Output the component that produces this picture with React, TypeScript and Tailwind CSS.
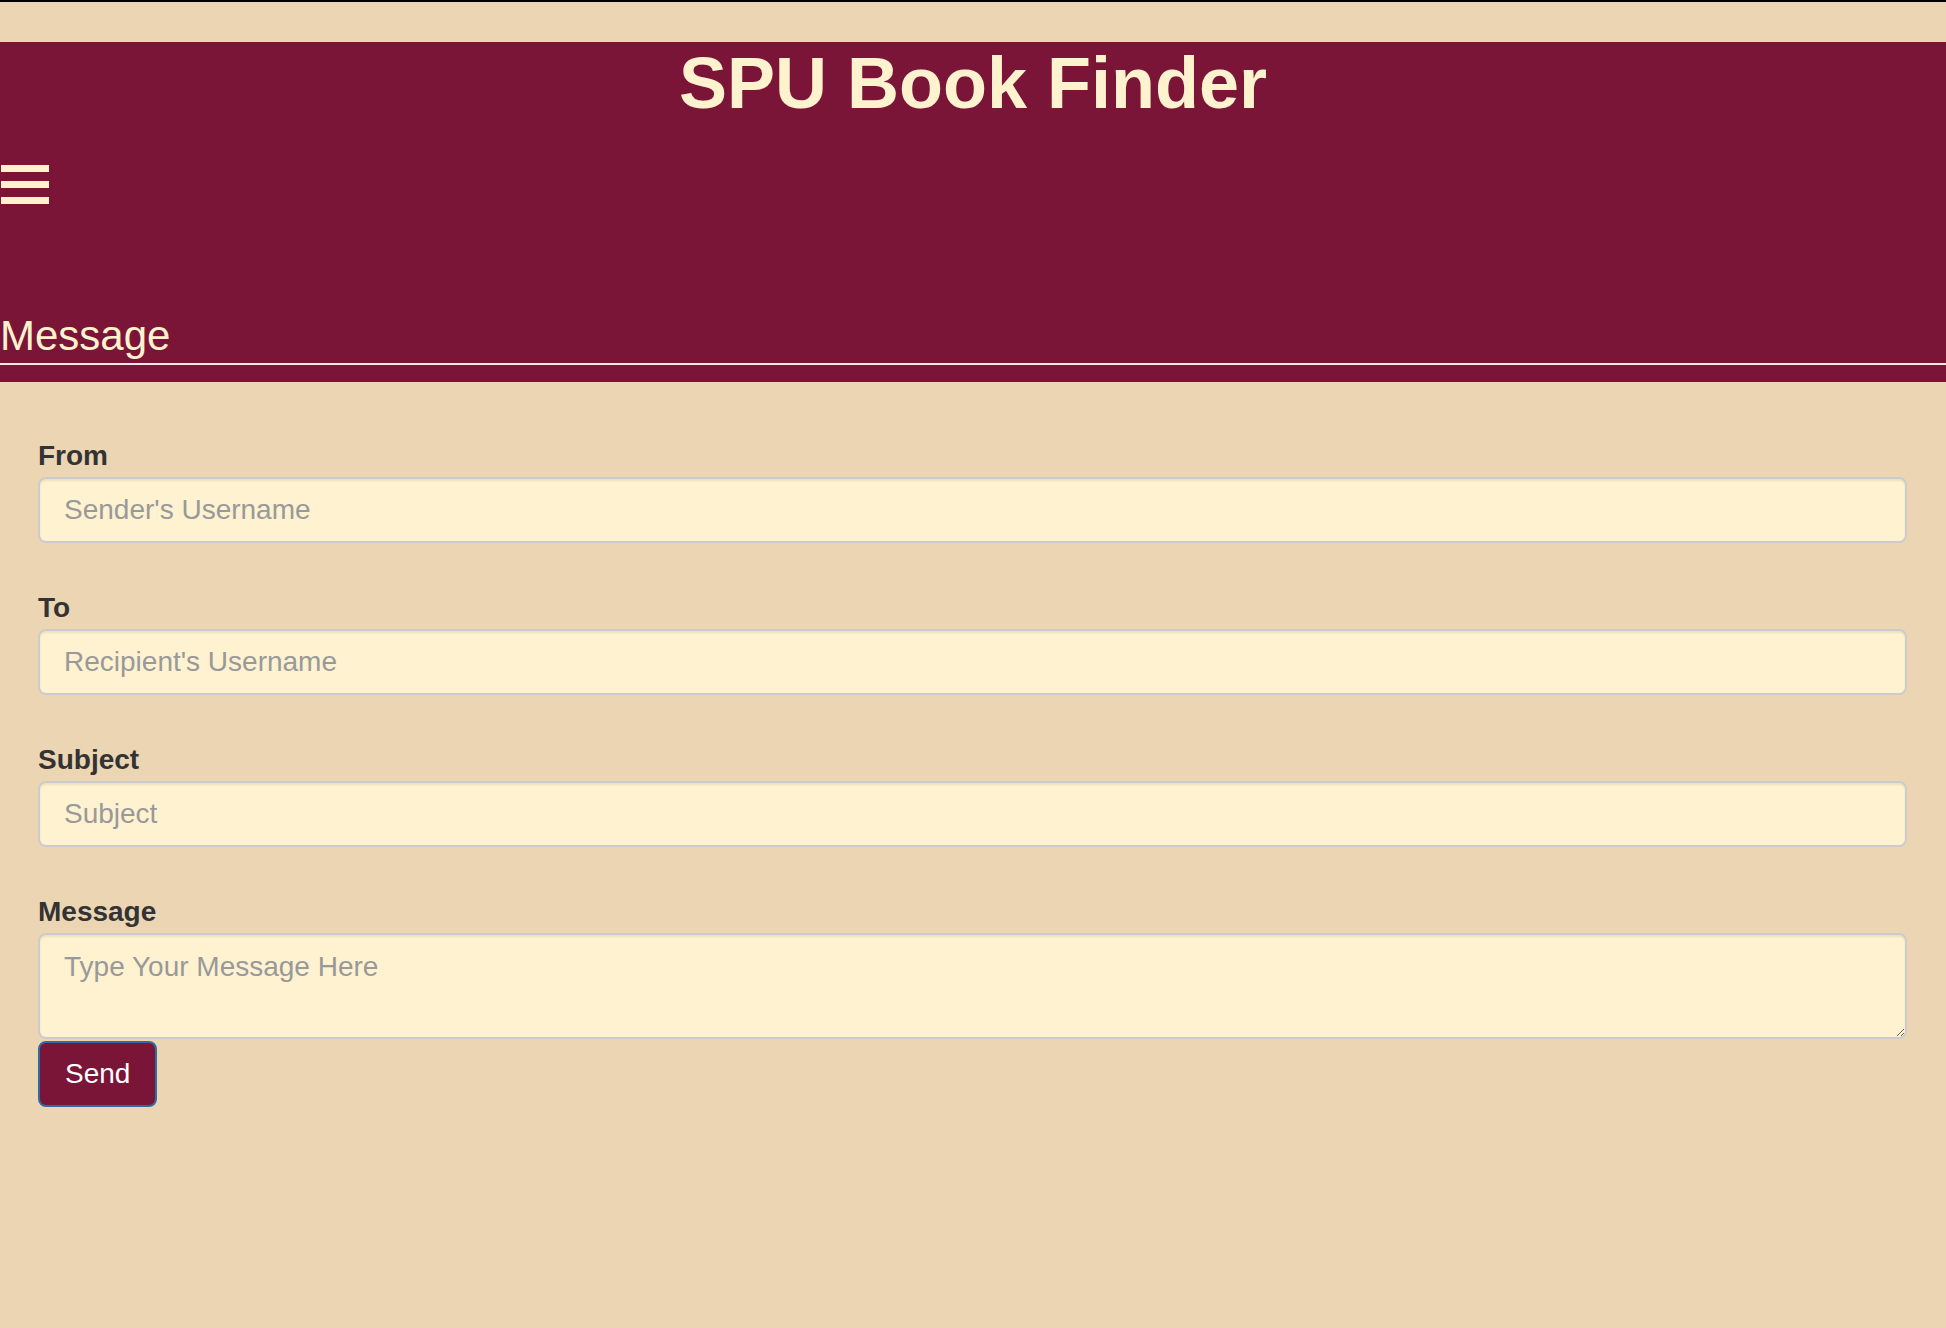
import React from "react";

const fields = [
    {label: "From", placeholder: "Sender's Username"},
    {label: "To", placeholder: "Recipient's Username"},
    {label: "Subject", placeholder: "Subject"},
];

const MenuIcon: React.FC = () => (
    <div className="ml-px mt-[41px] flex w-[48px] flex-col gap-[9px]">
        <div className="h-[7px] bg-[#fff2cf]"></div>
        <div className="h-[7px] bg-[#fff2cf]"></div>
        <div className="h-[7px] bg-[#fff2cf]"></div>
    </div>
);

const App: React.FC = () => {
    return (
        <div className="min-h-screen bg-[#ebd5b3] font-['Liberation_Sans',Arial,sans-serif]">
            <div className="h-[2px] bg-black"></div>
            <div className="h-[40px]"></div>

            <header className="bg-[#7b1537] pb-[17px]">
                <h1 className="text-center text-[72px] font-bold leading-[82px] text-[#fff2cf]">
                    SPU Book Finder
                </h1>
                <MenuIcon/>
                <h2 className="mt-[108px] border-b-2 border-[#f4ebe0] pb-[3px] text-[42px] leading-[48px] text-[#fff2cf]">
                    Message
                </h2>
            </header>

            <main className="pl-[38px] pr-[39px] pt-[54px]">
                <form onSubmit={(e) => e.preventDefault()}>
                    {fields.map((f) => (
                        <div key={f.label} className="mb-[45px]">
                            <label className="mb-px block text-[28px] font-bold leading-[40px] text-[#333]">
                                {f.label}
                            </label>
                            <input
                                type="text"
                                placeholder={f.placeholder}
                                className="block h-[66px] w-full rounded-[8px] border-2 border-[#cccccc] bg-[#fff2d0] px-[24px] text-[28px] text-[#555] shadow-[inset_0_2px_2px_rgba(0,0,0,0.075)] outline-none placeholder:text-[#999]"
                            />
                        </div>
                    ))}

                    <div>
                        <label className="mb-px block text-[28px] font-bold leading-[40px] text-[#333]">
                            Message
                        </label>
                        <textarea
                            placeholder="Type Your Message Here"
                            className="block h-[106px] w-full rounded-[8px] border-2 border-[#cccccc] bg-[#fff2d0] px-[24px] py-[12px] text-[28px] leading-[40px] text-[#555] shadow-[inset_0_2px_2px_rgba(0,0,0,0.075)] outline-none placeholder:text-[#999]"
                        />
                    </div>

                    <button
                        type="submit"
                        className="mt-[2px] h-[66px] rounded-[8px] border-2 border-[#2e6da4] bg-[#7b1537] px-[25px] text-[28px] leading-[40px] text-white"
                    >
                        Send
                    </button>
                </form>
            </main>
        </div>
    );
};

export default App;
